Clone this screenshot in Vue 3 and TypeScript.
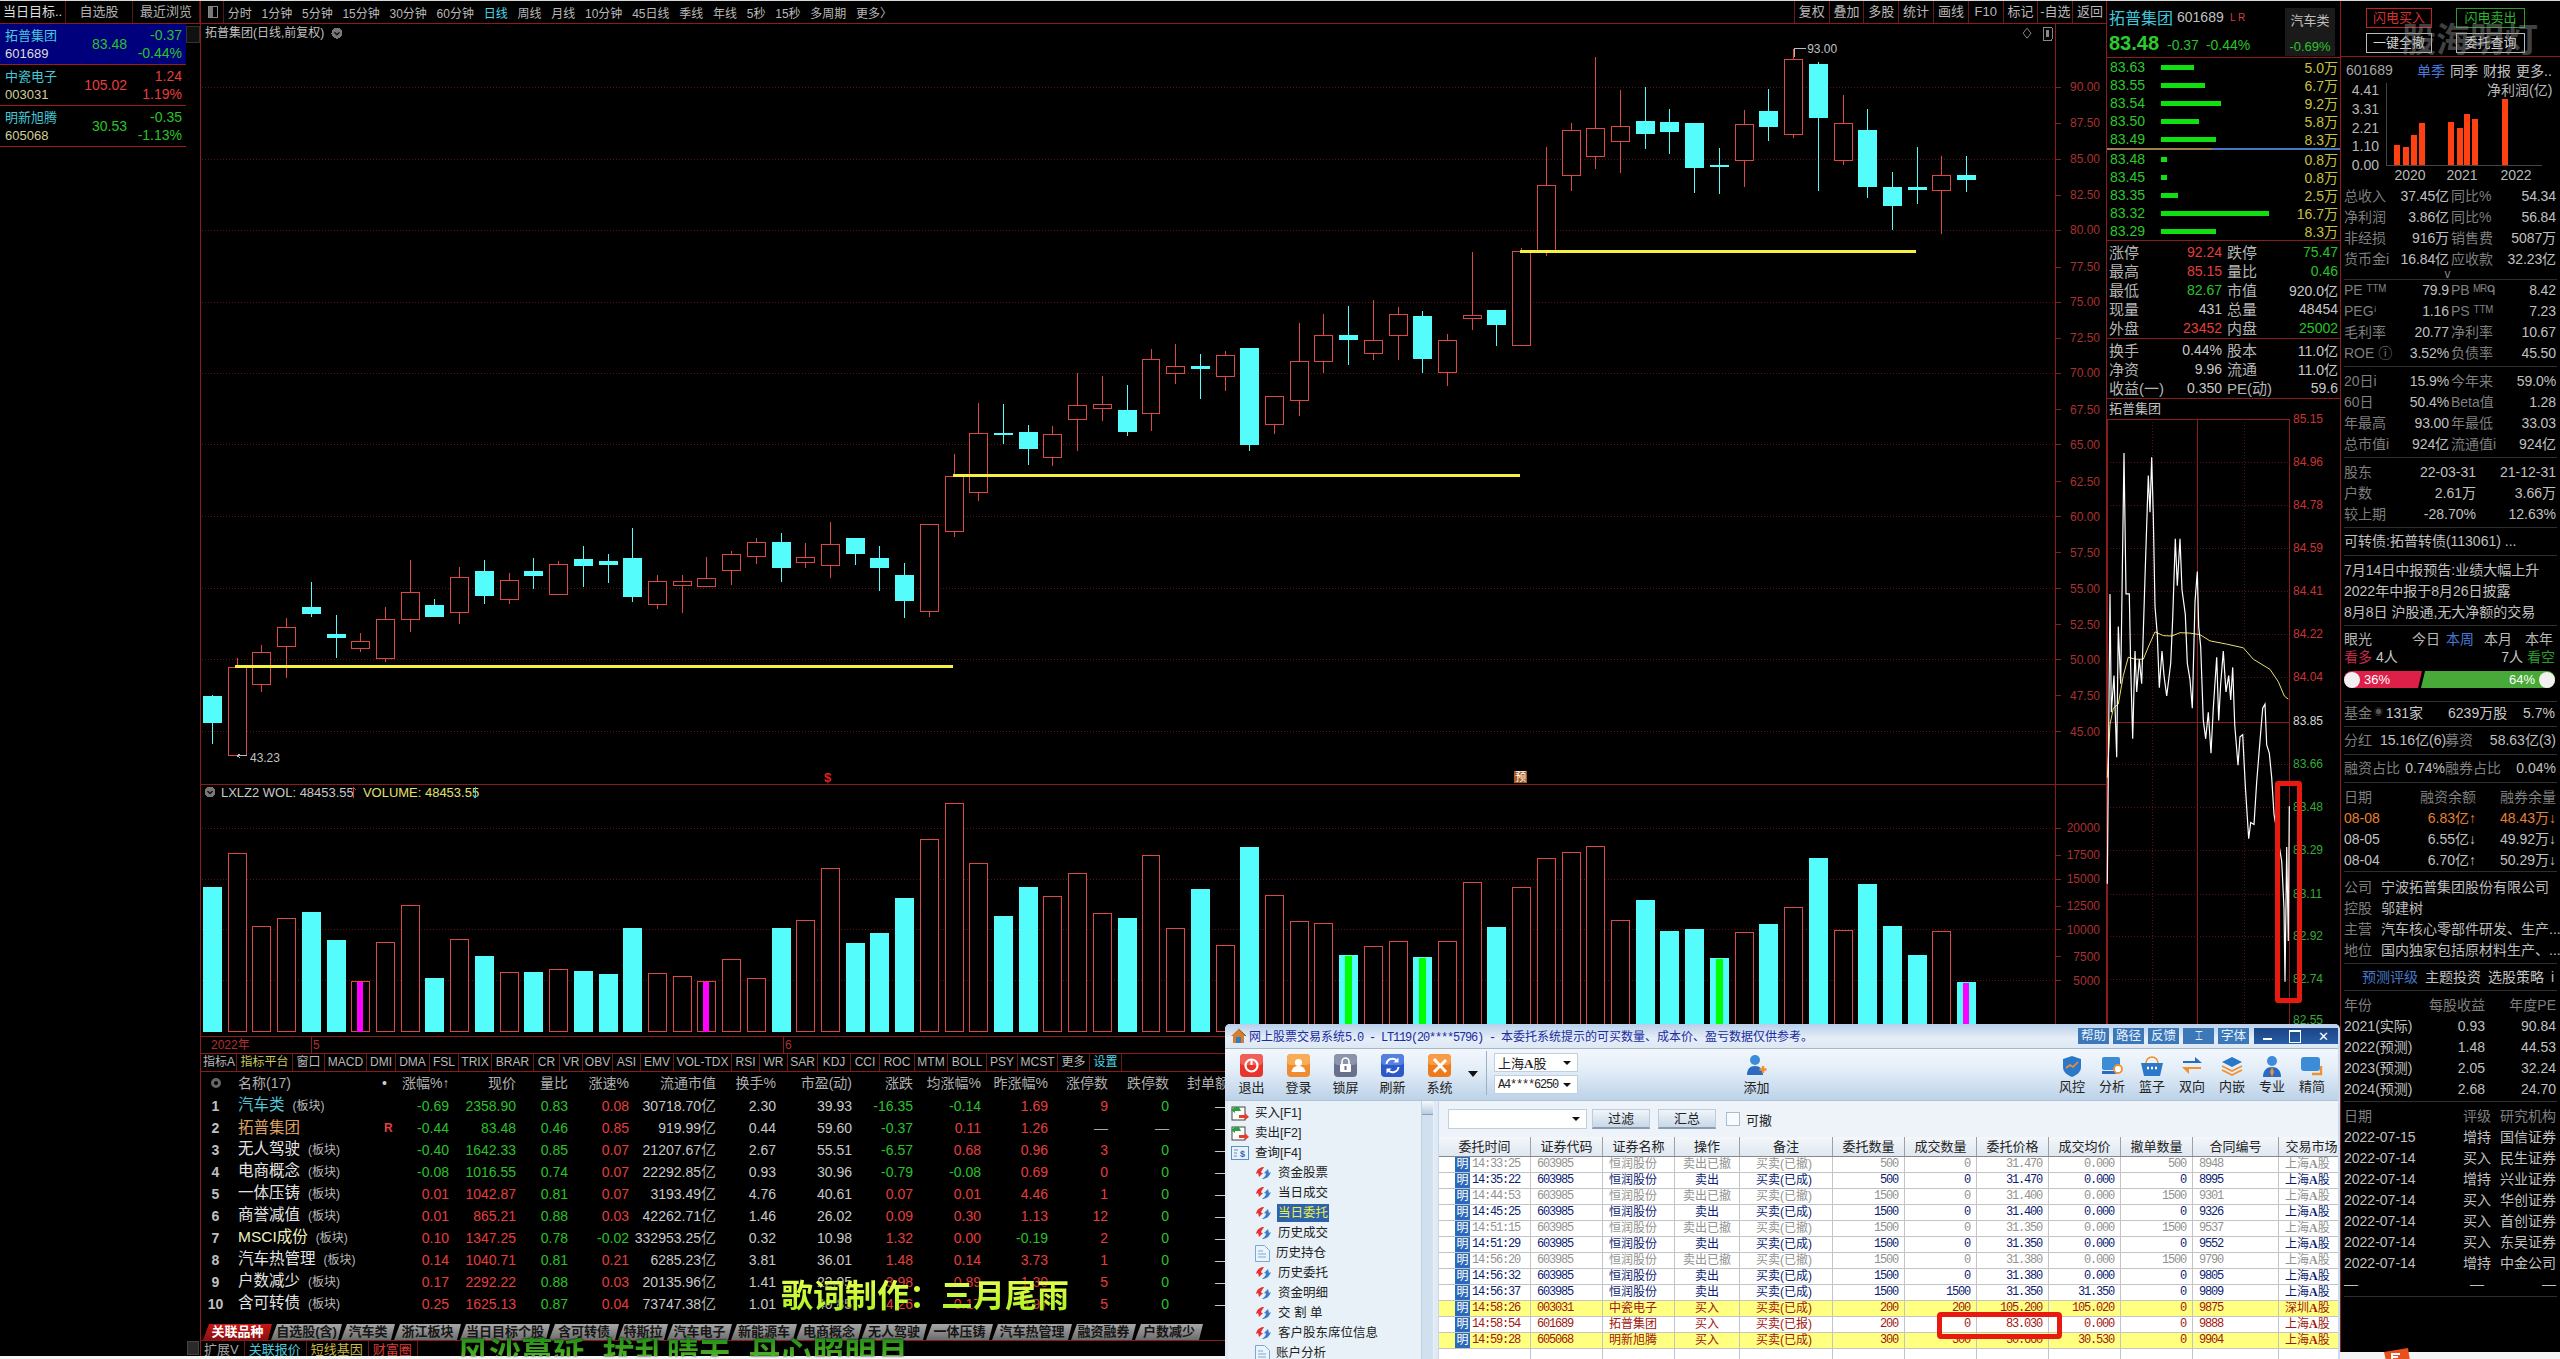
<script setup lang="ts">
// [type 1=red 0=cyan, bodyTop, bodyBottom, wickTop, wickBottom]
const candleRaw: number[][] = [
  [0,695,722,694,743],[1,666,754,657,755],[1,651,683,644,691],[1,626,645,617,677],[0,606,613,581,616],
  [0,633,637,614,657],[1,640,647,632,651],[1,618,657,606,661],[1,591,618,559,631],[0,604,616,598,616],
  [1,576,611,566,623],[0,570,595,559,603],[1,579,598,572,603],[0,570,575,557,588],[1,563,593,560,593],
  [0,558,565,545,586],[0,560,564,553,582],[0,557,596,527,601],[1,580,603,574,608],[1,580,584,574,612],
  [1,577,585,556,585],[1,553,569,550,584],[1,541,555,537,563],[0,541,567,532,581],[1,556,561,542,567],
  [1,543,564,521,577],[0,537,553,537,564],[0,557,567,545,590],[0,574,600,562,617],[1,523,610,523,616],
  [1,475,530,453,536],[1,432,491,402,500],[0,432,434,403,443],[0,431,448,424,464],[1,433,456,425,465],
  [1,404,418,372,450],[1,403,407,375,420],[0,409,431,384,435],[1,358,412,348,430],[1,365,372,343,383],
  [0,365,368,353,398],[1,354,375,350,390],[0,347,444,347,450],[1,395,423,395,433],[1,360,399,322,415],
  [1,334,360,313,372],[0,334,339,305,364],[1,339,352,299,359],[1,313,334,306,359],[0,315,358,310,372],
  [1,339,371,333,385],[1,314,317,251,329],[0,309,324,309,345],[1,250,344,247,344],[1,184,250,146,255],
  [1,129,174,122,190],[1,127,155,56,168],[1,125,140,89,172],[0,120,133,86,148],[0,121,131,108,153],
  [0,122,167,122,192],[0,164,166,147,193],[1,123,159,109,186],[0,110,126,88,140],[1,58,133,48,137],
  [0,63,117,61,190],[1,122,159,94,164],[0,129,186,108,197],[0,186,205,171,229],[0,186,189,146,203],
  [1,174,189,155,233],[0,174,179,155,191]
]
const candles = candleRaw.map((c, i) => ({
  x: Math.round(211 + i * 24.72), up: c[0] === 1, top: c[1], bot: c[2], hi: c[3], lo: c[4]
}))

// zoomed volume tops: 'r' hollow, 'c' cyan, 'm' hollow with magenta core, 'g' cyan with green core, 'p' cyan with magenta core
const volRaw: [string, number][] = [
  ['c',348],['r',247],['r',466],['r',442],['c',423],['c',507],['m',631],['r',514],['r',403],['c',621],
  ['r',505],['c',555],['r',604],['c',603],['r',595],['c',600],['c',609],['c',471],['r',607],['r',616],
  ['m',631],['r',565],['r',622],['c',471],['r',448],['r',292],['c',516],['c',486],['c',381],['r',205],
  ['r',97],['r',277],['c',435],['c',348],['r',376],['r',307],['r',427],['c',441],['r',253],['r',472],
  ['c',354],['r',523],['c',228],['r',373],['r',451],['r',457],['g',552],['r',526],['r',511],['g',558],
  ['r',511],['r',334],['c',468],['r',349],['r',262],['r',244],['r',226],['r',448],['c',387],['c',480],
  ['c',474],['g',561],['r',484],['c',459],['r',409],['c',261],['r',478],['c',339],['c',465],['c',552],
  ['r',481],['p',633]
]
const volBars = volRaw.map((v, i) => ({
  x: Math.round(211 + i * 24.72), kind: v[0], top: Math.round(770 + v[1] / 3)
}))

const priceGrid = [86, 158, 229, 301, 372, 444, 516, 588, 659, 731]
const priceTicks: [string, number][] = [
  ['90.00',86],['87.50',122],['85.00',158],['82.50',194],['80.00',229],['77.50',266],['75.00',301],['72.50',337],
  ['70.00',372],['67.50',409],['65.00',444],['62.50',481],['60.00',516],['57.50',552],['55.00',588],['52.50',624],
  ['50.00',659],['47.50',695],['45.00',731]
]
const volTicks: [string, number][] = [
  ['20000',827],['17500',854],['15000',878],['12500',905],['10000',929],['7500',956],['5000',980]
]
const volGrid = [827, 878, 929, 980]

const watch = [
  { name: '拓普集团', code: '601689', price: '83.48', chg: '-0.37', pct: '-0.44%', on: true, cls: 'dn' },
  { name: '中瓷电子', code: '003031', price: '105.02', chg: '1.24', pct: '1.19%', on: false, cls: 'up' },
  { name: '明新旭腾', code: '605068', price: '30.53', chg: '-0.35', pct: '-1.13%', on: false, cls: 'dn' }
]
const periods = ['分时','1分钟','5分钟','15分钟','30分钟','60分钟','日线','周线','月线','10分钟','45日线','季线','年线','5秒','15秒','多周期','更多〉']
const tools = ['复权','叠加','多股','统计','画线','F10','标记','-自选','返回']

const sells: [string, number, string][] = [['83.63',33,'5.0万'],['83.55',44,'6.7万'],['83.54',60,'9.2万'],['83.50',38,'5.8万'],['83.49',55,'8.3万']]
const buys: [string, number, string][] = [['83.48',6,'0.8万'],['83.45',6,'0.8万'],['83.35',17,'2.5万'],['83.32',108,'16.7万'],['83.29',55,'8.3万']]
const stats = [
  ['涨停','92.24','up','跌停','75.47','dn'],['最高','85.15','up','量比','0.46','dn'],['最低','82.67','dn','市值','920.0亿',''],
  ['现量','431','wh','总量','48454',''],['外盘','23452','up','内盘','25002','dn']
]
const stats2 = [['换手','0.44%','股本','11.0亿'],['净资','9.96','流通','11.0亿'],['收益(一)','0.350','PE(动)','59.6']]

const finA = [['总收入','37.45亿','同比%','54.34'],['净利润','3.86亿','同比%','56.84'],['非经损','916万','销售费','5087万'],['货币金i','16.84亿','应收款','32.23亿']]
const finB = [['PE ᵀᵀᴹ','79.9','PB ᴹᴿᑫ','8.42'],['PEGⁱ','1.16','PS ᵀᵀᴹ','7.23'],['毛利率','20.77','净利率','10.67'],['ROE ⓘ','3.52%','负债率','45.50']]
const finC = [['20日i','15.9%','今年来','59.0%'],['60日','50.4%','Beta值','1.28'],['年最高','93.00','年最低','33.03'],['总市值i','924亿','流通值i','924亿']]
const finBars = [[2394,145],[2403,147],[2411,135],[2419,123],[2448,122],[2457,128],[2464,114],[2472,119],[2502,99]]
const finAxis: [string, number][] = [['4.41',90],['3.31',109],['2.21',128],['1.10',146],['0.00',165]]
const shareRows = [['股东','22-03-31','21-12-31'],['户数','2.61万','3.66万'],['较上期','-28.70%','12.63%']]
const marginRows = [['08-08','6.83亿↑','48.43万↓'],['08-05','6.55亿↓','49.92万↓'],['08-04','6.70亿↑','50.29万↓']]
const bizRows = [['公司','宁波拓普集团股份有限公司'],['控股','邬建树'],['主营','汽车核心零部件研发、生产...'],['地位','国内独家包括原材料生产、...']]
const epsRows = [['年份','每股收益','年度PE'],['2021(实际)','0.93','90.84'],['2022(预测)','1.48','44.53'],['2023(预测)','2.05','32.24'],['2024(预测)','2.68','24.70']]
const rateRows = [
  ['2022-07-15','增持','国信证券'],['2022-07-14','买入','民生证券'],['2022-07-14','增持','兴业证券'],['2022-07-14','买入','华创证券'],
  ['2022-07-14','买入','首创证券'],['2022-07-14','买入','东吴证券'],['2022-07-14','增持','中金公司'],['—','—','—']
]

// intraday line, in zoom coordinates of the crop at (2100,400)
const toPts = (s: string) => s.split(' ').map(p => {
  const [a, b] = p.split(',').map(Number)
  return `${(2100 + a / 3).toFixed(1)},${(400 + b / 2.45).toFixed(1)}`
}).join(' ')
const priceLine = toPts('22,1190 25,920 30,480 34,770 42,680 50,880 55,560 62,700 72,135 78,480 88,480 92,660 98,835 105,620 110,720 118,640 125,700 135,440 145,190 150,280 155,145 160,290 165,510 172,580 178,710 186,620 192,680 200,730 212,650 218,540 226,345 232,460 240,345 246,470 256,530 262,650 270,690 277,760 285,500 292,425 296,560 302,610 310,790 317,835 325,770 333,870 340,760 350,635 356,790 362,700 370,620 378,720 386,680 392,740 398,660 404,800 414,900 420,830 428,825 436,950 446,1080 452,1040 462,1045 470,940 480,840 488,760 495,750 500,850 508,870 515,930 522,1020 545,1135 552,1250 555,1430 560,1100 565,1330 568,1000')
const avgLine = toPts('22,930 30,800 40,760 55,750 70,680 85,635 105,640 130,640 145,610 165,573 190,582 215,583 240,575 270,576 300,580 330,595 380,603 430,612 460,640 510,665 535,695 553,730 565,738')
const miniTicks: [string, number, string][] = [
  ['85.15',421,'#c83434'],['84.96',464,'#c83434'],['84.78',507,'#c83434'],['84.59',550,'#c83434'],['84.41',593,'#c83434'],['84.22',636,'#c83434'],
  ['84.04',679,'#c83434'],['83.85',723,'#d8d8d8'],['83.66',766,'#38a838'],['83.48',809,'#38a838'],['83.29',852,'#38a838'],['83.11',896,'#38a838'],
  ['82.92',938,'#38a838'],['82.74',981,'#38a838'],['82.55',1022,'#38a838']
]
const miniDots = [464, 507, 550, 593, 636, 679, 766, 809, 852, 896, 938, 981]

// indicator tabs: label and right edge
const indTabs: [string, number, string?][] = [
  ['指标A',237],['指标平台',293,'yl'],['窗口',325],['MACD',367],['DMI',396],['DMA',430],['FSL',459],['TRIX',492],['BRAR',534],['CR',560],['VR',583],
  ['OBV',613],['ASI',641],['EMV',674],['VOL-TDX',732],['RSI',760],['WR',788],['SAR',818],['KDJ',851],['CCI',880],['ROC',915],['MTM',948],['BOLL',987],
  ['PSY',1018],['MCST',1058],['更多',1090],['设置',1122,'cy']
].map((t, i, a) => [t[0], (t[1] as number) - (i ? (a[i - 1][1] as number) : 202), t[2]] as [string, number, string?])

const heads = ['名称(17)','•','涨幅%↑','现价','量比','涨速%','流通市值','换手%','市盈(动)','涨跌','均涨幅%','昨涨幅%','涨停数','跌停数','封单额']
interface Row { name: string; tag: string; cls: string; v: string[] }
const rows: Row[] = [
  { name: '汽车类', tag: '(板块)', cls: 'cy', v: ['-0.69','2358.90','0.83','0.08','30718.70','2.30','39.93','-16.35','-0.14','1.69','9','0'] },
  { name: '拓普集团', tag: '', cls: 'or', v: ['-0.44','83.48','0.46','0.85','919.99','0.44','59.60','-0.37','0.11','1.26','—','—'] },
  { name: '无人驾驶', tag: '(板块)', cls: '', v: ['-0.40','1642.33','0.85','0.07','21207.67','2.67','55.51','-6.57','0.68','0.96','3','0'] },
  { name: '电商概念', tag: '(板块)', cls: '', v: ['-0.08','1016.55','0.74','0.07','22292.85','0.93','30.96','-0.79','-0.08','0.69','0','0'] },
  { name: '一体压铸', tag: '(板块)', cls: '', v: ['0.01','1042.87','0.81','0.07','3193.49','4.76','40.61','0.07','0.01','4.46','1','0'] },
  { name: '商誉减值', tag: '(板块)', cls: '', v: ['0.01','865.21','0.88','0.03','42262.71','1.46','26.02','0.09','0.30','1.13','12','0'] },
  { name: 'MSCI成份', tag: '(板块)', cls: 'ms', v: ['0.10','1347.25','0.78','-0.02','332953.25','0.32','10.98','1.32','0.00','-0.19','2','0'] },
  { name: '汽车热管理', tag: '(板块)', cls: '', v: ['0.14','1040.71','0.81','0.21','6285.23','3.81','36.01','1.48','0.14','3.73','1','0'] },
  { name: '户数减少', tag: '(板块)', cls: '', v: ['0.17','2292.22','0.88','0.03','20135.96','1.41','22.95','3.98','0.89','1.30','5','0'] },
  { name: '含可转债', tag: '(板块)', cls: '', v: ['0.25','1625.13','0.87','0.04','73747.38','1.01','40.85','4.26','0.17','0.97','5','0'] }
]
const signCls = (s: string) => (s.startsWith('-') ? 'dn' : 'up')
function cellCls(r: Row, i: number) {
  if (i === 1) return signCls(r.v[0])
  if (i === 2) return 'dn'
  if (i === 4 || i === 5 || i === 6) return 'wh'
  if (i === 10) return r.v[i] === '—' ? 'gr' : 'up'
  if (i === 11) return r.v[i] === '—' ? 'gr' : 'dn'
  return signCls(r.v[i])
}

const blockTabs: [string, number][] = [
  ['关联品种',69],['自选股(含)',71],['汽车类',54],['浙江板块',67],['当日目标个股',90],['含可转债',70],['特斯拉',50],['汽车电子',65],['新能源车',66],
  ['电商概念',66],['无人驾驶',66],['一体压铸',67],['汽车热管理',80],['融资融券',65],['户数减少',68]
]

// trading window
interface Tree { t: string; lv: number; ic: string; on?: boolean }
const tree: Tree[] = [
  { t: '买入[F1]', lv: 0, ic: 'swap' },{ t: '卖出[F2]', lv: 0, ic: 'swap' },{ t: '查询[F4]', lv: 0, ic: 'query' },
  { t: '资金股票', lv: 1, ic: 'swirl' },{ t: '当日成交', lv: 1, ic: 'swirl' },{ t: '当日委托', lv: 1, ic: 'swirl', on: true },
  { t: '历史成交', lv: 1, ic: 'swirl' },{ t: '历史持仓', lv: 1, ic: 'doc' },{ t: '历史委托', lv: 1, ic: 'swirl' },
  { t: '资金明细', lv: 1, ic: 'swirl' },{ t: '交 割 单', lv: 1, ic: 'swirl' },{ t: '客户股东席位信息', lv: 1, ic: 'swirl' },{ t: '账户分析', lv: 1, ic: 'doc' }
]
const orderHeads = ['委托时间','证券代码','证券名称','操作','备注','委托数量','成交数量','委托价格','成交均价','撤单数量','合同编号','交易市场']
const mk = (t: string, c: string, n: string, op: string, nt: string, q: string, f: string, p: string, a: string, x: string, id: string, m: string, cls: string) =>
  ({ t, c, n, op, nt, q, f, p, a, x, id, m, cls })
const HR = '恒润股份'
const orders = [
  mk('14:33:25','603985',HR,'卖出已撤','买卖(已撤)','500','0','31.470','0.000','500','8948','上海','gy'),
  mk('14:35:22','603985',HR,'卖出','买卖(已成)','500','0','31.470','0.000','0','8995','上海','nv'),
  mk('14:44:53','603985',HR,'卖出已撤','买卖(已撤)','1500','0','31.400','0.000','1500','9301','上海','gy'),
  mk('14:45:25','603985',HR,'卖出','买卖(已成)','1500','0','31.400','0.000','0','9326','上海','nv'),
  mk('14:51:15','603985',HR,'卖出已撤','买卖(已撤)','1500','0','31.350','0.000','1500','9537','上海','gy'),
  mk('14:51:29','603985',HR,'卖出','买卖(已成)','1500','0','31.350','0.000','0','9552','上海','nv'),
  mk('14:56:20','603985',HR,'卖出已撤','买卖(已撤)','1500','0','31.380','0.000','1500','9790','上海','gy'),
  mk('14:56:32','603985',HR,'卖出','买卖(已成)','1500','0','31.380','0.000','0','9805','上海','nv'),
  mk('14:56:37','603985',HR,'卖出','买卖(已成)','1500','1500','31.350','31.350','0','9809','上海','nv'),
  mk('14:58:26','003031','中瓷电子','买入','买卖(已成)','200','200','105.200','105.020','0','9875','深圳','rd hl'),
  mk('14:58:54','601689','拓普集团','买入','买卖(已报)','200','0','83.030','0.000','0','9888','上海','rd'),
  mk('14:59:28','605068','明新旭腾','买入','买卖(已成)','300','300','30.660','30.530','0','9904','上海','rd hl')
]
const rightTools = ['风控','分析','篮子','双向','内嵌','专业','精简']
</script>

<template>
  <div class="screen">
    <div class="top-edge"></div>
    <div class="cols">
      <!-- watch list -->
      <aside class="watch">
        <div class="watch-tabs">
          <span class="on">当日目标..</span><span>自选股</span><span>最近浏览</span>
        </div>
        <div class="watch-body">
          <div class="watch-list">
            <div v-for="w in watch" :key="w.code" class="watch-row" :class="{ picked: w.on }">
              <div class="w-id"><b>{{ w.name }}</b><i>{{ w.code }}</i></div>
              <div class="w-price" :class="w.cls">{{ w.price }}</div>
              <div class="w-chg" :class="w.cls"><span>{{ w.chg }}</span><span>{{ w.pct }}</span></div>
            </div>
          </div>
          <div class="watch-scroll"><span></span></div>
        </div>
        <div class="watch-foot"><span></span></div>
      </aside>

      <!-- chart column -->
      <main class="center">
        <div class="toolbar">
          <span class="tb-toggle"><i></i></span>
          <span v-for="p in periods" :key="p" class="period" :class="{ cur: p === '日线' }">{{ p }}</span>
          <div class="tool-set">
            <span v-for="t in tools" :key="t">{{ t }}</span>
          </div>
        </div>

        <svg class="kline" viewBox="200 23 1906 760" shape-rendering="crispEdges">
          <text x="204" y="32" class="title" dominant-baseline="central">拓普集团(日线,前复权)</text>
          <circle cx="336" cy="32" r="5.5" fill="#777" />
          <path d="M333.5 31l2.5 2.5 2.5-2.5" fill="none" stroke="#111" stroke-width="1.4" shape-rendering="auto" />
          <line v-for="y in priceGrid" :key="y" x1="201" x2="2055" :y1="y" :y2="y" class="dot" />
          <line x1="2055.5" x2="2055.5" y1="23" y2="783" class="axis" />
          <g v-for="t in priceTicks" :key="t[0]">
            <line x1="2056" x2="2061" :y1="t[1]" :y2="t[1]" class="axis" />
            <text x="2100" :y="t[1]" class="ax" text-anchor="end" dominant-baseline="central">{{ t[0] }}</text>
          </g>
          <g v-for="c in candles" :key="c.x">
            <template v-if="c.up">
              <line :x1="c.x + .5" :x2="c.x + .5" :y1="c.hi" :y2="c.top" class="k-r" />
              <line :x1="c.x + .5" :x2="c.x + .5" :y1="c.bot" :y2="c.lo" class="k-r" />
              <rect :x="c.x - 9 + .5" :y="c.top + .5" width="18" :height="c.bot - c.top" class="b-r" />
            </template>
            <template v-else>
              <line :x1="c.x + .5" :x2="c.x + .5" :y1="c.hi" :y2="c.lo" class="k-c" />
              <rect :x="c.x - 9" :y="c.top" width="19" :height="Math.max(c.bot - c.top, 2)" class="b-c" />
            </template>
          </g>
          <line x1="234" x2="952" y1="666" y2="666" class="yl" />
          <line x1="952" x2="1520" y1="475" y2="475" class="yl" />
          <line x1="1520" x2="1916" y1="250" y2="250" class="yl" />
          <path d="M1794 56v-9h4M1798 47h8" fill="none" stroke="#bbb" />
          <text x="1807" y="48" class="note" dominant-baseline="central">93.00</text>
          <path d="M236 755h10M236 755l3-2M236 755l3 2" fill="none" stroke="#bbb" />
          <text x="249" y="757" class="note" dominant-baseline="central">43.23</text>
          <text x="827" y="777" class="mark" text-anchor="middle" dominant-baseline="central">$</text>
          <rect x="1514" y="770" width="13" height="12" fill="#a85a20" />
          <text x="1520.5" y="776" class="pre" text-anchor="middle" dominant-baseline="central">预</text>
          <path d="M2027 27l4 5-4 5-4-5z" fill="none" stroke="#888" shape-rendering="auto" />
          <rect x="2043" y="26" width="9" height="13" rx="1" fill="none" stroke="#888" />
          <rect x="2046" y="29" width="3" height="7" fill="#888" />
        </svg>

        <svg class="vol" viewBox="200 783 1906 252" shape-rendering="crispEdges">
          <line x1="200" x2="2106" y1="783.5" y2="783.5" class="axis" />
          <circle cx="209" cy="791" r="5.5" fill="#777" />
          <path d="M206.5 790l2.500 2.500 2.500-2.500" fill="none" stroke="#111" stroke-width="1.400" shape-rendering="auto" />
          <text x="220" y="791" class="vol-a" dominant-baseline="central">LXLZ2 WOL: 48453.55</text>
          <path d="M352.500 797v-11M350 789l2.500-3 2.500 3" fill="none" stroke="#d04030" />
          <text x="362" y="791" class="vol-b" dominant-baseline="central">VOLUME: 48453.55</text>
          <path d="M474.500 786v11M472 794l2.500 3 2.500-3" fill="none" stroke="#40c8d8" />
          <line v-for="y in volGrid" :key="y" x1="201" x2="2055" :y1="y" :y2="y" class="dot" />
          <line x1="2055.5" x2="2055.5" y1="783" y2="1035" class="axis" />
          <g v-for="t in volTicks" :key="t[0]">
            <line x1="2056" x2="2061" :y1="t[1]" :y2="t[1]" class="axis" />
            <text x="2100" :y="t[1]" class="ax" text-anchor="end" dominant-baseline="central">{{ t[0] }}</text>
          </g>
          <g v-for="b in volBars" :key="b.x">
            <rect v-if="b.kind === 'r' || b.kind === 'm'" :x="b.x - 9 + .5" :y="b.top + .5" width="18" :height="1030 - b.top" class="b-r" />
            <rect v-else :x="b.x - 9" :y="b.top" width="19" :height="1031 - b.top" class="b-c" />
            <rect v-if="b.kind === 'm' || b.kind === 'p'" :x="b.x - 3" :y="b.top + 1" width="6" :height="1030 - b.top" fill="#ff00ff" />
            <rect v-if="b.kind === 'g'" :x="b.x - 3" :y="b.top + 1" width="7" :height="1030 - b.top" fill="#00ff00" />
          </g>
        </svg>

        <div class="dates">
          <span class="d-1">2022年</span><span class="d-2">5</span><span class="d-3">6</span>
        </div>

        <div class="ind-tabs">
          <span v-for="t in indTabs" :key="t[0]" :class="t[2]" :style="{ width: t[1] + 'px' }">{{ t[0] }}</span>
        </div>

        <div class="table">
          <div class="t-row t-head">
            <span class="gear"></span>
            <span v-for="(h, i) in heads" :key="h" :class="i === 0 ? 'n' : i === 1 ? 'c' : ''">{{ h }}</span>
          </div>
          <div v-for="(r, ri) in rows" :key="r.name" class="t-row">
            <span class="idx">{{ ri + 1 }}</span>
            <span class="n" :class="r.cls">{{ r.name }}<em v-if="r.tag">{{ r.tag }}</em></span>
            <span class="c"><b v-if="r.cls === 'or'" class="rr">R</b></span>
            <span v-for="(val, i) in r.v" :key="i" :class="cellCls(r, i)">{{ val }}<small v-if="i === 4">亿</small></span>
            <span class="wh">—</span>
          </div>
        </div>

        <div class="block-tabs">
          <span v-for="(b, i) in blockTabs" :key="b[0]" :class="{ on: i === 0 }" :style="{ width: b[1] + 'px' }">{{ b[0] }}</span>
        </div>
        <div class="foot">
          <span class="gr">扩展V</span><span class="cy">关联报价</span><span class="yl2">短线基因</span><span class="rd2">财富圈</span>
        </div>
      </main>

      <!-- quote column -->
      <section class="quote">
        <div class="q-head">
          <div class="q-info">
            <div class="q-l1"><b>拓普集团</b><span>601689</span><em>L R</em></div>
            <div class="q-l2"><b>83.48</b><span>-0.37</span><span>-0.44%</span></div>
          </div>
          <div class="q-block"><span>汽车类</span><span class="dn">-0.69%</span></div>
        </div>
        <div class="book">
          <div v-for="s in sells" :key="s[0]" class="book-row"><span class="dn2">{{ s[0] }}</span><i><u :style="{ width: s[1] + 'px' }"></u></i><span class="vol-n">{{ s[2] }}</span></div>
        </div>
        <div class="book-mid"></div>
        <div class="book">
          <div v-for="s in buys" :key="s[0]" class="book-row"><span class="dn2">{{ s[0] }}</span><i><u :style="{ width: s[1] + 'px' }"></u></i><span class="vol-n">{{ s[2] }}</span></div>
        </div>
        <div class="stat-box">
          <div v-for="s in stats" :key="s[0]" class="stat"><label>{{ s[0] }}</label><span :class="s[2]">{{ s[1] }}</span><label>{{ s[3] }}</label><span :class="s[5] || 'wh'">{{ s[4] }}</span></div>
        </div>
        <div class="stat-box">
          <div v-for="s in stats2" :key="s[0]" class="stat"><label>{{ s[0] }}</label><span class="wh">{{ s[1] }}</span><label>{{ s[2] }}</label><span class="wh">{{ s[3] }}</span></div>
        </div>
        <div class="mini-title">拓普集团</div>
        <svg class="mini" viewBox="2107 421 233 938">
          <g shape-rendering="crispEdges">
            <line v-for="y in miniDots" :key="y" x1="2107" x2="2289" :y1="y" :y2="y" class="dot" />
            <line x1="2152" x2="2152" y1="421" y2="1359" class="dot" />
            <line x1="2244" x2="2244" y1="421" y2="1359" class="dot" />
            <line x1="2107" x2="2289" y1="421.5" y2="421.5" class="axis" />
            <line x1="2107.5" x2="2107.5" y1="421" y2="1359" class="axis" />
            <line x1="2197.5" x2="2197.5" y1="421" y2="1359" class="axis" />
            <line x1="2289.5" x2="2289.5" y1="421" y2="1359" class="axis" />
            <line x1="2107" x2="2289" y1="724.5" y2="724.5" class="axis" />
          </g>
          <text v-for="t in miniTicks" :key="t[0]" x="2293" :y="t[1]" class="mini-t" :fill="t[2]" dominant-baseline="central">{{ t[0] }}</text>
          <polyline :points="avgLine" fill="none" stroke="#e8e070" stroke-width="1" />
          <polyline :points="priceLine" fill="none" stroke="#fff" stroke-width="1.2" />
        </svg>
      </section>

      <!-- finance column -->
      <section class="fin">
        <div class="fin-btns">
          <span class="b-buy">闪电买入</span><span class="b-sell">闪电卖出</span>
          <span class="b-plain">一键全撤</span><span class="b-plain">委托查询</span>
        </div>
        <div class="fin-tabs"><span class="code">601689</span><span class="bl">单季</span><span>同季</span><span>财报</span><span>更多..</span></div>
        <svg class="fin-chart" viewBox="2341 83 219 100" shape-rendering="crispEdges">
          <text v-for="t in finAxis" :key="t[0]" x="2379" :y="t[1]" class="f-ax" text-anchor="end" dominant-baseline="central">{{ t[0] }}</text>
          <line x1="2386.5" x2="2386.5" y1="83" y2="165" stroke="#444" />
          <line x1="2386" x2="2542" y1="165.5" y2="165.5" stroke="#444" />
          <rect v-for="b in finBars" :key="b[0]" :x="b[0]" :y="b[1]" width="6" :height="165 - b[1]" fill="#ff4010" />
          <text x="2410" y="175" class="f-ax" text-anchor="middle" dominant-baseline="central">2020</text>
          <text x="2462" y="175" class="f-ax" text-anchor="middle" dominant-baseline="central">2021</text>
          <text x="2516" y="175" class="f-ax" text-anchor="middle" dominant-baseline="central">2022</text>
          <text x="2487" y="90" class="f-ax" dominant-baseline="central">净利润(亿)</text>
        </svg>
        <div class="f-sec s-a">
          <div v-for="r in finA" :key="r[0]" class="f4"><label>{{ r[0] }}</label><span>{{ r[1] }}</span><label>{{ r[2] }}</label><span>{{ r[3] }}</span></div>
          <div class="f-more">v</div>
        </div>
        <div class="f-sec s-b">
          <div v-for="r in finB" :key="r[0]" class="f4"><label>{{ r[0] }}</label><span>{{ r[1] }}</span><label>{{ r[2] }}</label><span>{{ r[3] }}</span></div>
        </div>
        <div class="f-sec s-c">
          <div v-for="r in finC" :key="r[0]" class="f4"><label>{{ r[0] }}</label><span>{{ r[1] }}</span><label>{{ r[2] }}</label><span>{{ r[3] }}</span></div>
        </div>
        <div class="f-sec s-share">
          <div v-for="r in shareRows" :key="r[0]" class="f3"><label>{{ r[0] }}</label><span>{{ r[1] }}</span><span>{{ r[2] }}</span></div>
        </div>
        <div class="f-sec s-one"><div class="line">可转债:拓普转债(113061) ...</div></div>
        <div class="f-sec s-share news">
          <div class="line">7月14日中报预告:业绩大幅上升</div>
          <div class="line">2022年中报于8月26日披露</div>
          <div class="line">8月8日 沪股通,无大净额的交易</div>
        </div>
        <div class="f-sec s-eye">
          <div class="eye-a"><span>眼光</span><span class="sp"></span><span>今日</span><span class="bl">本周</span><span>本月</span><span>本年</span></div>
          <div class="eye-b"><span><em class="pk">看多</em> 4人</span><span>7人 <em class="gn">看空</em></span></div>
          <div class="eye-bar">
            <div class="bar-r"><i></i>36%</div>
            <div class="bar-g">64%<i></i></div>
          </div>
        </div>
        <div class="f-sec s-row s-fund"><div class="f5"><label>基金</label><sup>◉</sup><span class="v1">131家</span><span class="v2">6239万股</span><span class="v3">5.7%</span></div></div>
        <div class="f-sec s-row"><div class="f6"><label>分红</label><span>15.16亿(6)</span><label>募资</label><span>58.63亿(3)</span></div></div>
        <div class="f-sec s-row"><div class="f6 wide"><label>融资占比</label><span>0.74%</span><label>融券占比</label><span>0.04%</span></div></div>
        <div class="f-sec s-margin">
          <div class="f3"><label>日期</label><label class="tr">融资余额</label><label class="tr">融券余量</label></div>
          <div v-for="(r, i) in marginRows" :key="r[0]" class="f3" :class="{ hot: i === 0 }"><span class="tl">{{ r[0] }}</span><span>{{ r[1] }}</span><span>{{ r[2] }}</span></div>
        </div>
        <div class="f-sec s-biz">
          <div v-for="r in bizRows" :key="r[0]" class="biz"><label>{{ r[0] }}</label><span>{{ r[1] }}</span></div>
        </div>
        <div class="f-sec s-row links"><span class="bl">预测评级</span><span>主题投资</span><span>选股策略</span><span>i</span></div>
        <div class="f-sec s-eps">
          <div v-for="(r, i) in epsRows" :key="r[0]" class="f7" :class="{ dim: i === 0 }"><span class="tl">{{ r[0] }}</span><span>{{ r[1] }}</span><span>{{ r[2] }}</span></div>
        </div>
        <div class="f-sec s-rate">
          <div class="f8 dim"><span>日期</span><span>评级</span><span>研究机构</span></div>
          <div v-for="(r, i) in rateRows" :key="i" class="f8"><span>{{ r[0] }}</span><span>{{ r[1] }}</span><span>{{ r[2] }}</span></div>
        </div>
      </section>
    </div>
    <div class="bottom-edge"></div>

    <!-- overlays -->
    <div class="watermark">股海明灯</div>
    <div class="mark-mini"></div>
    <div class="lyric-a">歌词制作：三月尾雨</div>
    <div class="lyric-b">风沙蔓延&nbsp;&nbsp;扰乱晴天&nbsp;&nbsp;丹心照明月</div>
    <div class="snip">
      <svg width="30" height="13" viewBox="0 0 30 13"><path d="M2 4 26 0l2 13H4z" fill="#e8501c" /><path d="M10 12V6h8M10 9h6" stroke="#fff" stroke-width="2" fill="none" /></svg>
    </div>

    <!-- trading window -->
    <div class="win">
      <div class="win-title">
        <svg class="w-home" width="17" height="16" viewBox="0 0 17 16"><path d="M1 8 8.5 1 16 8h-2v7H3V8z" fill="#d08030" /><rect x="6" y="9" width="5" height="6" fill="#3c78c0" /><path d="M8.5 1 16 8" stroke="#8a4a18" fill="none" /></svg>
        <span class="w-cap">网上股票交易系统<span class="m">5.0 - LT119(20****5796) - </span>本委托系统提示的可买数量、成本价、盈亏数据仅供参考。</span>
        <div class="w-btns">
          <span>帮助</span><span>路径</span><span>反馈</span><span class="pin">⌶</span><span>字体</span>
          <div class="w-ctl"><i class="mn"></i><i class="mx"></i><i class="cl">✕</i></div>
        </div>
      </div>
      <div class="win-tools">
        <div class="wt">
          <svg width="23" height="23" viewBox="0 0 23 23"><rect width="23" height="23" rx="4" fill="#e8342c" /><rect width="23" height="11" rx="4" fill="#f06058" /><circle cx="11.5" cy="11.5" r="6" fill="none" stroke="#fff" stroke-width="2.2" /><rect x="10.4" y="5" width="2.2" height="6" fill="#fff" /></svg>
          <span>退出</span>
        </div>
        <div class="wt">
          <svg width="23" height="23" viewBox="0 0 23 23"><rect width="23" height="23" rx="4" fill="#f08c30" /><rect width="23" height="11" rx="4" fill="#f8ac58" /><circle cx="11.5" cy="8.5" r="3.6" fill="#fff" /><path d="M4.5 18c.6-4.5 3.6-6 7-6s6.400 1.500 7 6z" fill="#fff" /></svg>
          <span>登录</span>
        </div>
        <div class="wt">
          <svg width="23" height="23" viewBox="0 0 23 23"><rect width="23" height="23" rx="4" fill="#68708c" /><rect width="23" height="11" rx="4" fill="#8c94ac" /><rect x="6" y="10" width="11" height="8" rx="1" fill="#fff" /><path d="M8 10V7.500a3.500 3.500 0 0 1 7 0V10" fill="none" stroke="#fff" stroke-width="1.600" /><rect x="10.500" y="12" width="2" height="4" fill="#68708c" /></svg>
          <span>锁屏</span>
        </div>
        <div class="wt">
          <svg width="23" height="23" viewBox="0 0 23 23"><rect width="23" height="23" rx="4" fill="#2c58c8" /><rect width="23" height="11" rx="4" fill="#5480e0" /><path d="M5.500 10a6 6 0 0 1 10.500-3.200M17.500 13a6 6 0 0 1-10.500 3.200" fill="none" stroke="#fff" stroke-width="2" /><path d="M17.500 3.500v5h-5zM5.500 19.500v-5h5z" fill="#fff" /></svg>
          <span>刷新</span>
        </div>
        <div class="wt">
          <svg width="23" height="23" viewBox="0 0 23 23"><rect width="23" height="23" rx="4" fill="#ee7a1c" /><rect width="23" height="11" rx="4" fill="#f89c48" /><path d="M6 5l12 13M18 6 6 18" stroke="#fff" stroke-width="3" /></svg>
          <span>系统</span>
        </div>
        <span class="wt-more"></span>
        <span class="wt-div"></span>
        <div class="wt-sel">
          <div class="sel"><span>上海<b>A</b>股</span><i></i></div>
          <div class="sel"><span class="m2">A4****6250</span><i></i></div>
        </div>
        <div class="wt wt-add">
          <svg width="26" height="23" viewBox="0 0 26 23"><circle cx="11" cy="6" r="5" fill="#3c8cd8" /><path d="M3 21c0-6 3-9 8-9s8 3 8 9z" fill="#2c6cc0" /><path d="M19 12v7M15.500 15.500h7" stroke="#f09030" stroke-width="2.400" /></svg>
          <span>添加</span>
        </div>
        <div class="wt-right">
          <div v-for="t in rightTools" :key="t" class="wr">
            <svg width="24" height="21" viewBox="0 0 24 21">
              <template v-if="t === '风控'"><path d="M12 0l9 3v8c0 5-4 8-9 10-5-2-9-5-9-10V3z" fill="#2c78c8" /><path d="M6 12l4-3 3 2 5-5" stroke="#f09030" stroke-width="1.600" fill="none" /></template>
              <template v-else-if="t === '分析'"><rect x="2" y="1" width="18" height="13" rx="2" fill="#3c8cd8" /><rect x="2" y="15" width="14" height="3" fill="#2c6cc0" /><circle cx="18" cy="13" r="4" fill="#fff" stroke="#f09030" stroke-width="1.800" /></template>
              <template v-else-if="t === '篮子'"><path d="M6 7a6 6 0 0 1 12 0" fill="none" stroke="#f09030" stroke-width="1.600" /><path d="M1 7h22l-3 13H4z" fill="#2c78c8" /><path d="M7 12h2M11 12h2M15 12h2" stroke="#fff" stroke-width="2.400" /></template>
              <template v-else-if="t === '双向'"><path d="M3 5h12V1l7 6H3z" fill="#2c6cc0" /><path d="M21 13H9v5l-7-7h19z" fill="#f09030" /></template>
              <template v-else-if="t === '内嵌'"><path d="M12 1l10 5-10 5L2 6z" fill="#2c78c8" /><path d="M2 10l10 5 10-5M2 14l10 5 10-5" stroke="#f09030" stroke-width="1.800" fill="none" /></template>
              <template v-else-if="t === '专业'"><circle cx="12" cy="5" r="5" fill="#3c8cd8" /><path d="M3 21c0-7 4-10 9-10s9 3 9 10z" fill="#2c6cc0" /><path d="M12 11l2 5-2 5-2-5z" fill="#f09030" /></template>
              <template v-else><rect x="1" y="1" width="19" height="14" rx="3" fill="#3c8cd8" /><path d="M12 18h9v-8" stroke="#f09030" stroke-width="2.400" fill="none" /></template>
            </svg>
            <span>{{ t }}</span>
          </div>
        </div>
      </div>
      <div class="win-body">
        <div class="tree">
          <div class="tree-list">
            <div v-for="n in tree" :key="n.t" class="node" :class="'lv' + n.lv">
              <svg v-if="n.ic === 'swap'" width="18" height="15" viewBox="0 0 18 15"><rect x="1" y="1" width="13" height="13" fill="#fff" stroke="#444" /><path d="M8 1H4L0 4l4 3V5h6z" fill="#2aa040" /><path d="M8 9h6V7l4 4-4 3v-2H8z" fill="#e83c2c" /></svg>
              <svg v-else-if="n.ic === 'query'" width="18" height="14" viewBox="0 0 18 14"><rect x=".5" y=".5" width="17" height="13" fill="#e8f2fc" stroke="#5a90c8" /><path d="M3 4h4M3 7h3M3 10h3" stroke="#5a90c8" /><text x="9" y="11" class="dollar">$</text></svg>
              <svg v-else-if="n.ic === 'doc'" width="15" height="17" viewBox="0 0 15 17"><path d="M.5.5h9l5 5v11H.5z" fill="#eaf4fc" stroke="#7ca8d0" /><path d="M3 6h5M3 9h8M3 12h8" stroke="#7ca8d0" /></svg>
              <svg v-else width="17" height="14" viewBox="0 0 17 14"><path d="M9 1C5 1 2 3 1 8l2-1 1 4 4-4-2-.500C6 5 8 3 9 1z" fill="#e83030" /><path d="M7 13c4 0 7-2 9-7l-2 1-1-4-4 4 2 .500c0 2-2 4-4 5.500z" fill="#3a7cc8" /></svg>
              <span :class="{ on: n.on }">{{ n.t }}</span>
            </div>
          </div>
          <div class="tree-scroll"><span></span></div>
        </div>
        <div class="orders">
          <div class="filter">
            <div class="combo"><i></i></div>
            <span class="btn">过滤</span><span class="btn">汇总</span>
            <span class="chk"></span><span class="chk-l">可撤</span>
          </div>
          <div class="grid">
            <div class="g-row g-head"><span v-for="h in orderHeads" :key="h">{{ h }}</span></div>
            <div v-for="o in orders" :key="o.t" class="g-row" :class="o.cls">
              <span class="g-time"><b>明</b><i>{{ o.t }}</i></span>
              <span class="g-l num">{{ o.c }}</span>
              <span class="g-l">{{ o.n }}</span>
              <span class="g-c">{{ o.op }}</span>
              <span class="g-nt">{{ o.nt }}</span>
              <span class="g-r num">{{ o.q }}</span>
              <span class="g-r num">{{ o.f }}</span>
              <span class="g-r num">{{ o.p }}</span>
              <span class="g-r num">{{ o.a }}</span>
              <span class="g-r num">{{ o.x }}</span>
              <span class="g-l num">{{ o.id }}</span>
              <span class="g-l">{{ o.m }}<b class="a">A</b>股</span>
            </div>
            <div class="g-row g-fill"><span v-for="h in orderHeads" :key="h"></span></div>
          </div>
        </div>
      </div>
      <div class="mark-order"></div>
    </div>
  </div>
</template>

<style>
html, body { margin: 0; background: #000; }
</style>

<style scoped>
.screen {
  position: relative; width: 2560px; height: 1359px; overflow: hidden; background: #000; color: #c8c8c8;
  font: 14px "Liberation Sans", "Noto Sans CJK SC", sans-serif;
  display: flex; flex-direction: column;
}
.top-edge { height: 1px; background: #d8d8d8; flex: none; }
.bottom-edge { height: 3px; background: #f4f4f4; flex: none; }
.cols { flex: 1; min-height: 0; display: grid; grid-template-columns: 200px 1906px 234px 220px; }
.up { color: #e63e3e; } .dn { color: #2ac22a; } .wh { color: #c8c8c8; } .gr { color: #aaa; }
.cy { color: #4cc8d8; } .bl { color: #4878d8; }

/* watch list */
.watch { display: flex; flex-direction: column; position: relative; }
.watch-tabs { height: 22px; flex: none; display: grid; grid-template-columns: 66px 67px 67px; border-bottom: 1px solid #8c1c1c; }
.watch-tabs span { font-size: 13px; line-height: 22px; text-align: center; color: #b0b0b0; border-right: 1px solid #5a1414; }
.watch-tabs .on { color: #ddd; }
.watch-body { flex: 1; display: flex; }
.watch-list { width: 186px; }
.watch-scroll { width: 14px; }
.watch-scroll span { display: block; height: 15px; margin-top: 2px; border: 1px solid #333; background: #111; }
.watch-row { height: 41px; box-sizing: border-box; border-bottom: 1px solid #9c1c1c; display: flex; align-items: center; padding: 0 4px 0 5px; }
.watch-row.picked { background: #00007c; }
.w-id { width: 70px; display: flex; flex-direction: column; gap: 1px; }
.w-id b { font-weight: 400; font-size: 13px; line-height: 17px; color: #46c8d8; }
.w-id i { font-style: normal; font-size: 13px; line-height: 17px; color: #d0cf98; }
.picked .w-id i { color: #ddd; }
.w-price { width: 52px; text-align: right; }
.w-chg { flex: 1; display: flex; flex-direction: column; align-items: flex-end; line-height: 18px; }
.watch-foot { height: 18px; flex: none; display: flex; justify-content: flex-end; }
.watch-foot span { width: 12px; height: 14px; margin-right: 1px; border: 1px solid #444; background: #2a2a2a; box-sizing: border-box; }

/* chart column */
.center { border-left: 1px solid #8c1c1c; display: flex; flex-direction: column; min-width: 0; }
.toolbar { height: 22px; border-bottom: 1px solid #8c1c1c; display: flex; align-items: center; gap: 9.75px; flex: none; }
.tb-toggle { width: 23px; height: 22px; margin-right: -6px; box-sizing: border-box; border-right: 1px solid #5a1414; padding: 5px 0 0 7px; flex: none; }
.tb-toggle i { display: block; width: 10px; height: 12px; border: 1px solid #888; background: linear-gradient(90deg, #777 50%, #000 50%); box-sizing: border-box; }
.period { font-size: 12px; color: #b8b8b8; white-space: nowrap; }
.period.cur { color: #4cd8e8; }
.tool-set { margin-left: auto; display: flex; height: 22px; margin-right: -1px; }
.tool-set span { width: 34.8px; box-sizing: border-box; text-align: center; font-size: 13px; line-height: 22px; color: #b8b8b8; border-left: 1px solid #6a1818; }
.kline { display: block; width: 1905px; height: 760px; flex: none; }
.vol { display: block; width: 1905px; height: 252px; flex: none; }
.title { font-size: 12px; fill: #c0c0c0; }
.dot { stroke: #5c1212; stroke-dasharray: 1 2; }
.axis { stroke: #8c1c1c; }
.ax { font-size: 12px; fill: #a83232; }
.k-r { stroke: #dc4848; } .k-c { stroke: #54fcfc; }
.b-r { fill: #000; stroke: #dc4848; } .b-c { fill: #54fcfc; }
.yl { stroke: #f8f040; stroke-width: 3; }
.note { font-size: 12px; fill: #c0c0c0; }
.mark { font-size: 13px; font-weight: 700; fill: #e02020; }
.pre { font-size: 11px; fill: #fff; }
.vol-a { font-size: 13px; fill: #c8c8c8; }
.vol-b { font-size: 13px; fill: #e0e070; }
.dates { height: 17px; flex: none; border-top: 1px solid #8c1c1c; display: flex; font-size: 12px; line-height: 16px; color: #b03030; box-sizing: border-box; }
.d-1 { margin-left: 10px; width: 100px; }
.d-2 { width: 470px; border-left: 1px solid #8c1c1c; padding-left: 1px; }
.d-3 { border-left: 1px solid #8c1c1c; padding-left: 1px; }
.ind-tabs { height: 17px; flex: none; border-top: 1px solid #8c1c1c; border-bottom: 1px solid #8c1c1c; display: flex; padding-left: 1px; }
.ind-tabs span { box-sizing: border-box; text-align: center; border-right: 1px solid #6a1818; font-size: 12px; line-height: 16px; color: #b8b8b8; white-space: nowrap; overflow: hidden; }
.ind-tabs .yl { color: #c8c860; stroke: none; } .ind-tabs .cy { color: #4cd8e8; }
.table { height: 252px; flex: none; overflow: hidden; padding-top: 1px; box-sizing: border-box; }
.t-row {
  height: 22px; display: grid; align-items: center;
  grid-template-columns: 31px 150px 20px 47px 67px 52px 61px 87px 60px 76px 61px 68px 67px 60px 61px 60px;
  text-align: right; line-height: 22px; white-space: nowrap;
}
.t-head { height: 20px; line-height: 20px; color: #b0b0b0; margin-bottom: 1px; }
.gear { width: 10px; height: 10px; margin-left: 10px; border-radius: 50%; border: 3px solid #666; box-sizing: border-box; }
.idx { text-align: center; color: #c0c0c0; font-weight: 700; padding-right: 2px; }
.t-row .n { text-align: left; padding-left: 6px; font-size: 15.5px; color: #e4e4e4; }
.t-row .n.cy { color: #4cc8d8; } .t-row .n.or { color: #dca060; } .t-row .n.ms { color: #eef0c0; }
.t-head .n { font-size: 14px; color: #b0b0b0; }
.t-row em { font-style: normal; font-size: 12px; margin-left: 8px; color: #b8b8b8; }
.t-row .c { text-align: left; color: #ccc; }
.rr { color: #e04040; font-size: 12px; margin-left: 2px; }
.t-row small { font-size: 15px; color: #aaa; }
.block-tabs { height: 16px; flex: none; display: flex; margin-left: 2px; overflow: hidden; }
.block-tabs span {
  box-sizing: border-box; text-align: center; background: linear-gradient(#a8a8a8, #6c6c6c); color: #161616; font-size: 13px; font-weight: 700;
  line-height: 16px; white-space: nowrap; margin-right: -1px; flex: none;
  clip-path: polygon(0 100%, 6px 0, 100% 0, calc(100% - 4px) 100%);
}
.block-tabs .on { background: linear-gradient(#c81818, #8c1010); color: #fff; }
.foot { height: 18px; flex: none; border-top: 1px solid #8c1c1c; display: flex; font-size: 13px; line-height: 17px; padding-left: 3px; }
.foot span { padding: 0 5px 0 0; margin-right: 4px; border-right: 1px solid #6a1818; white-space: nowrap; }
.yl2 { color: #c8b848; } .rd2 { color: #d83c3c; }

/* quote */
.quote { border-left: 1px solid #8c1c1c; display: flex; flex-direction: column; min-width: 0; }
.q-head { height: 34px; padding: 7px 5px 15px 2px; border-bottom: 1px solid #8c1c1c; display: flex; flex: none; }
.q-info { flex: 1; position: relative; margin-top: -1px; }
.q-l1 { display: flex; align-items: center; height: 20px; }
.q-l1 b { font-weight: 400; font-size: 16px; color: #3cc8dc; width: 68px; white-space: nowrap; }
.q-l1 span { color: #c0c0c0; width: 53px; }
.q-l1 em { font-style: normal; font-size: 10px; color: #d83c3c; }
.q-l2 { display: flex; align-items: baseline; margin-top: 5px; color: #2ac22a; white-space: nowrap; }
.q-l2 b { font-size: 20px; font-weight: 700; width: 58px; color: #2ccc2c; }
.q-l2 span { margin-right: 7px; }
.q-block { width: 50px; height: 48px; background: #1a1a1a; display: flex; flex-direction: column; align-items: center; font-size: 13px; justify-content: center; gap: 10px; color: #c0c0c0; margin-bottom: -13px; }
.book { flex: none; }
.book-row { height: 18px; display: flex; align-items: center; padding: 0 2px 0 3px; }
.dn2 { color: #2cc82c; width: 51px; }
.book-row i { flex: 1; }
.book-row u { display: block; height: 5px; background: #10e010; }
.vol-n { color: #c8c040; white-space: nowrap; }
.book-mid { height: 2px; flex: none; background: linear-gradient(90deg, #a08050 0, #a08050 45%, #4878c0 45%, #4878c0 100%); }
.stat-box { border-top: 1px solid #8c1c1c; padding: 1px 2px; flex: none; }
.stat { height: 19px; display: flex; align-items: center; white-space: nowrap; }
.stat label { font-size: 15px; color: #b4b4b4; }
.stat label:nth-of-type(1) { width: 70px; margin-right: -70px; }
.stat span:nth-of-type(1) { width: 113px; text-align: right; margin-right: 5px; }
.stat span:nth-of-type(2) { flex: 1; text-align: right; }
.mini-title { height: 20px; flex: none; border-top: 1px solid #8c1c1c; line-height: 20px; font-size: 13px; color: #c0c0c0; padding-left: 2px; }
.mini { display: block; width: 233px; height: 938px; flex: none; overflow: visible; }
.mini-t { font-size: 12px; }

/* finance */
.fin { border-left: 1px solid #8c1c1c; padding: 0 3px; min-width: 0; display: flex; flex-direction: column; }
.fin-btns { height: 56px; margin: 0 -3px; flex: none; box-sizing: border-box; border-bottom: 1px solid #8c1c1c; padding: 7px 35px 0 25px; display: grid; grid-template-columns: 66px 69px; justify-content: space-between; grid-auto-rows: 20px; row-gap: 5px; font-size: 13px; }
.fin-btns span { box-sizing: border-box; text-align: center; line-height: 18px; }
.b-buy { border: 1px solid #c82020; color: #d83030; }
.b-sell { border: 1px solid #2aa02a; color: #2cb82c; }
.b-plain { border: 1px solid #bbb; color: #d8d8d8; }
.fin-tabs { height: 26px; flex: none; display: flex; align-items: center; gap: 5px; white-space: nowrap; color: #c0c0c0; padding-left: 2px; }
.fin-tabs .code { width: 66px; color: #a8a8a8; }
.fin-chart { display: block; width: 219px; height: 100px; margin: 0 -3px; flex: none; }
.f-ax { font-size: 14px; fill: #b8b8b8; }
.f-sec { border-bottom: 1px solid #2e2e2e; flex: none; box-sizing: border-box; }
.f4, .f3, .f7, .f8, .biz, .line { height: 21px; line-height: 21px; white-space: nowrap; }
.s-a { margin-top: 3px; height: 94px; }
.f-more { height: 9px; line-height: 8px; text-align: center; font-size: 12px; color: #888; padding-right: 6px; }
.s-b { height: 87px; }
.s-c { padding-top: 4px; height: 91px; }
.s-share { padding-top: 4px; height: 70px; }
.s-margin { padding-top: 4px; height: 89px; }
.s-eps { padding-top: 4px; height: 111px; }
.s-rate { padding-top: 4px; height: 195px; }
.f4 { display: grid; grid-template-columns: 48px 57px 48px 59px; }
.f4 label, .f3 label, .biz label { color: #7e7e7e; }
.f4 span { text-align: right; color: #c0c0c0; letter-spacing: -.1px; }
.f4 label:nth-of-type(2) { padding-left: 2px; }
.f3 { display: grid; grid-template-columns: 40px 92px 80px; }
.f3 span, .tr { text-align: right; color: #c0c0c0; }
.f3 label.tr { color: #7e7e7e; text-align: right; }
.f3 .tl { text-align: left; }
.f3.hot span { color: #e88030; }
.s-one { height: 28px; }
.s-one .line { line-height: 27px; height: 27px; color: #c0c0c0; }
.news .line { color: #c0c0c0; }
.s-eye { padding-top: 3px; height: 76px; }
.eye-a { display: flex; height: 20px; line-height: 20px; gap: 6px; color: #b8b8b8; }
.eye-a .sp { flex: 1; margin-left: 22px; } .eye-a span:last-child { margin-left: 7px; margin-right: 4px; }
.eye-a span:nth-last-child(2) { margin-left: 4px; }
.eye-b { display: flex; justify-content: space-between; height: 17px; line-height: 17px; padding-right: 2px; }
.eye-b em { font-style: normal; } .pk { color: #c8284c; } .gn { color: #2c9a2c; }
.eye-bar { display: flex; height: 17px; margin-top: 5px; font-size: 13px; color: #fff; line-height: 17px; }
.eye-bar i { display: inline-block; width: 16px; height: 16px; border-radius: 50%; background: #f0f0f0; }
.bar-r { width: 78px; background: #dc2048; display: flex; gap: 4px; align-items: center; clip-path: polygon(0 0, 100% 0, 95% 100%, 0 100%); border-radius: 8px 0 0 8px; }
.bar-g { flex: 1; margin-left: -1px; margin-right: 2px; background: #48a838; display: flex; gap: 4px; align-items: center; justify-content: flex-end; clip-path: polygon(3% 0, 100% 0, 100% 100%, 0 100%); border-radius: 0 8px 8px 0; }
.s-row { height: 28px; line-height: 27px; white-space: nowrap; }
.s-fund { height: 25px; line-height: 23px; }
.f5 { display: flex; } .f5 label, .f6 label { color: #7e7e7e; }
.f5 sup { font-size: 9px; color: #555; line-height: 20px; width: 12px; margin-left: 2px; }
.v1 { width: 64px; } .v2 { width: 77px; } .v3 { flex: 1; text-align: right; padding-right: 2px; }
.f6 { display: grid; grid-template-columns: 36px 65px 36px 75px; }
.f6 span { color: #c0c0c0; text-align: right; }
.f6.wide { grid-template-columns: 56px 45px 56px 55px; }
.s-biz { padding-top: 5px; height: 92px; }
.biz { display: grid; grid-template-columns: 37px 1fr; } .biz span { color: #bcbcbc; }
.links { display: flex; gap: 7px; padding-left: 18px; height: 27px; } .links span { color: #c0c0c0; } .links .bl { color: #4878c8; }
.f7 { display: grid; grid-template-columns: 80px 61px 71px; }
.f7 span, .f8 span { text-align: right; color: #c0c0c0; } .f7 .tl { text-align: left; }
.f8 { display: grid; grid-template-columns: 111px 44px 57px; }
.f8 span:first-child { text-align: left; } .f8 span:nth-child(2) { text-align: center; }
.dim span { color: #7e7e7e !important; }

/* overlays */
.watermark { position: absolute; left: 2402px; top: 13px; font-size: 34px; font-weight: 700; color: rgba(150, 150, 150, .45); white-space: nowrap; }
.mark-mini { position: absolute; left: 2275px; top: 781px; width: 27px; height: 222px; box-sizing: border-box; border: 5px solid #e81a10; border-radius: 3px; }
.lyric-a, .lyric-b { position: absolute; white-space: nowrap; font-weight: 700; font-size: 32px; line-height: 36px; filter: drop-shadow(0 0 1px #000); background-clip: text; -webkit-background-clip: text; color: transparent; }
.lyric-a { left: 781px; top: 1278px; background-image: linear-gradient(#e8ff50, #a8f020); }
.lyric-b { left: 457px; top: 1336px; height: 20px; overflow: hidden; background-image: linear-gradient(#1c8a10, #50b028); }
.snip { position: absolute; left: 2340px; right: 0; top: 1352px; height: 7px; background: #f4f4f4; overflow: visible; }
.snip svg { position: absolute; left: 42px; top: -4px; }

/* trading window */
.win {
  position: absolute; left: 1225px; top: 1024px; width: 1115px; height: 335px; background: #dfeaf4; display: flex; flex-direction: column;
  border-radius: 5px 5px 0 0; overflow: hidden; color: #222; font-size: 12px; border-right: 2px solid #c8dcee; box-sizing: border-box;
}
.win-title { height: 24px; flex: none; display: flex; align-items: center; padding-left: 5px; background: linear-gradient(#b8cfea, #e6eef8 60%, #dce8f4); border-bottom: 1px solid #a8b8c8; }
.w-home { flex: none; margin-right: 2px; }
.w-cap { color: #1a2ca0; font-size: 12px; white-space: nowrap; }
.m { font-family: "Liberation Mono", monospace; letter-spacing: -1.2px; white-space: pre; }
.w-btns { margin-left: auto; display: flex; align-items: center; gap: 4px; height: 16px; }
.w-btns > span { width: 31px; height: 16px; line-height: 16px; text-align: center; background: #3c78b8; color: #e8f2ff; font-size: 12.5px; }
.w-ctl { display: flex; width: 84px; height: 16px; background: linear-gradient(#1c4484, #285ea8); margin-left: 1px; align-items: center; justify-content: space-around; }
.w-ctl i { font-style: normal; color: #fff; }
.mn { width: 9px; height: 2px; background: #fff; margin-top: 6px; }
.mx { width: 10px; height: 10px; border: 1px solid #fff; border-top-width: 2px; }
.cl { font-size: 13px; }
.win-tools { height: 52px; flex: none; box-sizing: border-box; display: flex; background: linear-gradient(#f2f7fc, #e4eef8 40%, #bcd2e8); border-bottom: 1px solid #b0c4d8; padding-left: 3px; position: relative; }
.wt { width: 47px; display: flex; flex-direction: column; align-items: center; padding-top: 5px; gap: 2px; font-size: 13px; color: #222; }
.wt span { line-height: 17px; }
.wt-more { width: 0; height: 0; margin: 22px 8px 0 5px; border: 5px solid transparent; border-top: 6px solid #111; border-bottom: 0; }
.wt-div { width: 1px; height: 44px; margin: 2px 7px 0 0; background: #9ab0c4; }
.wt-sel { width: 84px; display: flex; flex-direction: column; gap: 3px; padding-top: 4px; }
.sel { height: 19px; background: #fff; border: 1px solid #c0d0e0; box-sizing: border-box; display: flex; align-items: center; justify-content: space-between; padding: 0 6px 0 3px; font-size: 13px; }
.sel b { font-family: "Liberation Serif", serif; }
.sel i { border: 4px solid transparent; border-top: 4px solid #111; border-bottom: 0; }
.m2 { font-family: "Liberation Mono", monospace; font-size: 12px; letter-spacing: -1.2px; }
.wt-add { margin-left: 155px; }
.wt-right { margin-left: auto; display: flex; padding-right: 6px; }
.wr { width: 40px; display: flex; flex-direction: column; align-items: center; padding-top: 7px; font-size: 13px; }
.wr span { line-height: 17px; margin-top: 1px; }
.win-body { flex: 1; display: flex; min-height: 0; }
.tree { width: 206px; flex: none; margin-left: 3px; background: #e8f1f8; display: flex; overflow: hidden; }
.tree-list { flex: 1; padding-top: 2px; }
.tree-scroll { width: 11px; margin-right: 1px; background: #d0e0ee; border-left: 1px solid #c0d0e0; }
.tree-scroll span { display: block; height: 13px; background: linear-gradient(#f4f8fc, #b8cce0); border-bottom: 1px solid #8aa0b8; }
.node { height: 20px; display: flex; align-items: center; gap: 5px; font-size: 12.5px; white-space: nowrap; }
.node svg { flex: none; }
.lv0 { padding-left: 3px; } .lv1 { padding-left: 27px; }
.node span { padding: 2px 1px; line-height: 14px; }
.node .on { background: #2e62b0; color: #e8f040; }
.dollar { font-size: 9px; font-weight: 700; fill: #2a6ab0; }
.orders { flex: 1; min-width: 0; margin-left: 4px; background: #edf3f9; display: flex; flex-direction: column; border-left: 1px solid #c8d8e8; }
.filter { height: 36px; flex: none; display: flex; align-items: center; padding: 0 0 0 9px; }
.combo { width: 139px; height: 20px; box-sizing: border-box; background: #fff; border: 1px solid #c0d0e0; display: flex; align-items: center; justify-content: flex-end; padding-right: 6px; margin-right: 5px; }
.combo i { border: 4px solid transparent; border-top: 4px solid #111; border-bottom: 0; }
.btn { width: 58px; height: 20px; box-sizing: border-box; margin-right: 8px; text-align: center; line-height: 18px; font-size: 13px; border: 1px solid #bcccdc; border-bottom: 2px solid #8a9cb0; background: linear-gradient(#f0f5fa, #c8d8e8); }
.chk { width: 12px; height: 12px; margin: 0 6px 0 2px; background: #f8fbfe; border: 1px solid #a8bccc; }
.chk-l { font-size: 13px; }
.grid { flex: 1; display: flex; flex-direction: column; background: #fff; min-height: 0; }
.g-row { height: 16px; box-sizing: border-box; display: grid; grid-template-columns: 92px 72px 72px 65px 93px 72px 72px 72px 72px 72px 86px 65px; border-bottom: 1px solid #c4c4c4; white-space: nowrap; line-height: 15px; flex: none; }
.g-row > span { border-right: 1px solid #c4c4c4; overflow: hidden; padding: 0 6px; }
.g-row > span:last-child { padding-right: 0; border-right: 0; }
.g-head { height: 20px; background: linear-gradient(#f4f7fb, #dfe7f0); border-bottom: 1px solid #888; line-height: 19px; font-size: 13px; color: #222; text-align: center; }
.g-head > span { border-right: 1px solid #a0a0a0; padding: 0; }
.g-time { padding: 0 0 0 16px !important; display: flex; align-items: center; }
.g-time b { width: 15px; height: 15px; flex: none; background: #2a6ab8; color: #fff; font-weight: 400; font-size: 12px; line-height: 15px; text-align: center; margin-right: 2px; }
.g-time i { font-style: normal; font-family: "Liberation Mono", monospace; letter-spacing: -1.2px; }
.num { font-family: "Liberation Mono", monospace; letter-spacing: -1.2px; }
.g-r { text-align: right; } .g-c { text-align: center; } .g-nt { padding-left: 16px !important; }
.g-row .a { font-family: "Liberation Serif", serif; }
.gy { color: #929292; } .nv { color: #0c1c70; } .rd { color: #a01810; }
.hl { background: #ffff80; }
.g-fill { flex: 1; border-bottom: 0; }
.mark-order { position: absolute; left: 712px; top: 288px; width: 125px; height: 27px; box-sizing: border-box; border: 5px solid #e81a10; border-radius: 4px; }
</style>
